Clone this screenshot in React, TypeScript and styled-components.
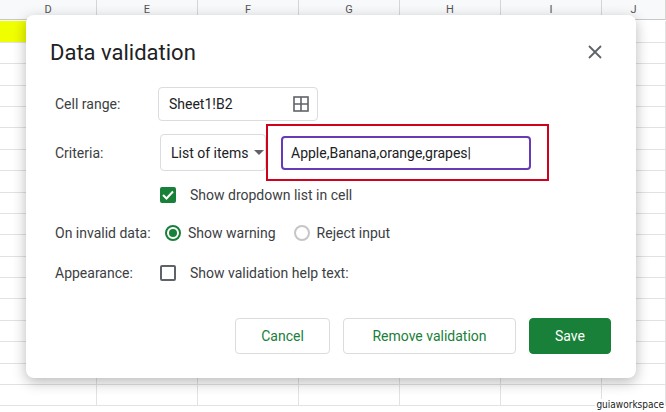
import React from "react";
import styled, { createGlobalStyle } from "styled-components";

const G = createGlobalStyle`
  body { margin:0; font-family: Roboto, "Liberation Sans", sans-serif; background:#fff; }
  #root { width:666px; height:412px; position:relative; overflow:hidden; }
`;

const Sheet = styled.div`
  display:grid; grid-template-columns: 97px repeat(5,101px) 64px;
  grid-auto-rows: 21.4px; width:666px;
`;
const Head = styled.div`
  height:19px; border-right:1px solid #d6d6d6; border-bottom:1px solid #c8c8c8;
  background:#f8f9fa; font-size:11px; color:#555; text-align:center; line-height:19px;
`;
const Cell = styled.div<{ $y?: boolean }>`
  border-right:1px solid #e2e2e2; border-bottom:1px solid #e2e2e2;
  background:${p => (p.$y ? "linear-gradient(90deg,#f0ff00 27px,#fff 27px)" : "#fff")};
`;
const Mark = styled.div`
  position:absolute; right:1px; bottom:2px; font-size:10px; color:#222;
  font-family:"DejaVu Sans Condensed","Liberation Sans",sans-serif; background:#fff; padding:0 1px;
`;
const Dialog = styled.div`
  position:absolute; left:26px; top:15px; width:610px; height:363px; box-sizing:border-box;
  background:#fff; border-radius:8px; box-shadow:0 4px 14px rgba(0,0,0,.28);
  padding:22px 24px 0 24px; color:#202124;
`;
const TitleRow = styled.div`display:flex; justify-content:space-between; align-items:center; height:30px;`;
const Title = styled.div`font-size:22px; font-weight:400; color:#202124;`;
const Row = styled.div<{ $h: number; $mt: number }>`
  display:flex; align-items:center; height:${p => p.$h}px; margin-top:${p => p.$mt}px;
`;
const Label = styled.div<{ $w: number }>`
  width:${p => p.$w}px; padding-left:5px; font-size:14px; color:#3c4043; flex:none; box-sizing:border-box;
`;
const Box = styled.div`
  width:160px; height:34px; box-sizing:border-box; border:1px solid #dadce0; border-radius:4px;
  display:flex; align-items:center; justify-content:space-between; padding:0 8px 0 10px; font-size:14px;
`;
const Select = styled.div`
  width:106px; height:37px; box-sizing:border-box; border:1px solid #dadce0; border-radius:4px;
  display:flex; align-items:center; gap:6px; padding-left:10px; font-size:14px; margin-left:2px;
`;
const RedBox = styled.div`
  width:283px; height:57px; box-sizing:border-box; border:2px solid #d0021b; display:flex;
  align-items:center; padding-left:13px;
`;
const Input = styled.div`
  width:250px; height:34px; box-sizing:border-box; border:2px solid #673ab7; border-radius:4px;
  font-size:14px; padding:7px 8px; color:#202124;
`;
const Check = styled.div<{ $on?: boolean }>`
  width:16px; height:16px; box-sizing:border-box; border-radius:2px;
  border:2px solid ${p => (p.$on ? "#188038" : "#5f6368")}; background:${p => (p.$on ? "#188038" : "#fff")};
  display:flex; align-items:center; justify-content:center; margin-right:14px;
`;
const Radio = styled.div<{ $on?: boolean }>`
  width:16px; height:16px; box-sizing:border-box; border-radius:50%;
  border:2px solid ${p => (p.$on ? "#188038" : "#c4c7c5")}; display:flex; align-items:center; justify-content:center;
  margin-right:7px;
  &::after { content:""; width:8px; height:8px; border-radius:50%; background:${p => (p.$on ? "#188038" : "transparent")}; }
`;
const Txt = styled.span<{ $mr?: number }>`font-size:14px; color:#3c4043; margin-right:${p => p.$mr || 0}px;`;
const Buttons = styled.div`display:flex; justify-content:flex-end; gap:13px; margin-top:36px; padding-right:1px;`;
const Btn = styled.div<{ $w: number; $primary?: boolean }>`
  width:${p => p.$w}px; height:36px; box-sizing:border-box; border-radius:4px; display:flex;
  align-items:center; justify-content:center; font-size:14px; font-weight:400;
  border:1px solid ${p => (p.$primary ? "#188038" : "#dadce0")};
  background:${p => (p.$primary ? "#188038" : "#fff")}; color:${p => (p.$primary ? "#fff" : "#188038")};
`;

const cols = ["D", "E", "F", "G", "H", "I", "J"];

export default function App() {
  return (
    <>
      <G />
      <Sheet>
        {cols.map(c => <Head key={c}>{c}</Head>)}
        {Array.from({ length: 18 * 7 }).map((_, i) => <Cell key={i} $y={i === 0} />)}
      </Sheet>
      <Mark>guiaworkspace</Mark>
      <Dialog>
        <TitleRow>
          <Title>Data validation</Title>
          <svg width="14" height="14" viewBox="0 0 14 14" style={{ marginRight: 10 }}>
            <path d="M1 1L13 13M13 1L1 13" stroke="#5f6368" strokeWidth="1.8" />
          </svg>
        </TitleRow>
        <Row $h={34} $mt={20}>
          <Label $w={108}>Cell range:</Label>
          <Box>
            Sheet1!B2
            <svg width="16" height="16" viewBox="0 0 16 16">
              <rect x="1" y="1" width="14" height="14" fill="none" stroke="#5f6368" strokeWidth="1.6" />
              <path d="M8 1V15M1 8H15" stroke="#5f6368" strokeWidth="1.6" />
            </svg>
          </Box>
        </Row>
        <Row $h={57} $mt={3}>
          <Label $w={108}>Criteria:</Label>
          <Select>
            List of items
            <svg width="10" height="6" viewBox="0 0 10 6"><path d="M0 0L5 5L10 0Z" fill="#5f6368" /></svg>
          </Select>
          <RedBox><Input>Apple,Banana,orange,grapes|</Input></RedBox>
        </Row>
        <Row $h={18} $mt={5}>
          <Label $w={110} />
          <Check $on>
            <svg width="12" height="10" viewBox="0 0 12 10"><path d="M1 5L4.5 8.5L11 1.5" fill="none" stroke="#fff" strokeWidth="2" /></svg>
          </Check>
          <Txt>Show dropdown list in cell</Txt>
        </Row>
        <Row $h={18} $mt={20}>
          <Label $w={115}>On invalid data:</Label>
          <Radio $on /><Txt $mr={18}>Show warning</Txt>
          <Radio /><Txt>Reject input</Txt>
        </Row>
        <Row $h={18} $mt={22}>
          <Label $w={110}>Appearance:</Label>
          <Check />
          <Txt>Show validation help text:</Txt>
        </Row>
        <Buttons>
          <Btn $w={95}>Cancel</Btn>
          <Btn $w={173}>Remove validation</Btn>
          <Btn $w={82} $primary>Save</Btn>
        </Buttons>
      </Dialog>
    </>
  );
}
